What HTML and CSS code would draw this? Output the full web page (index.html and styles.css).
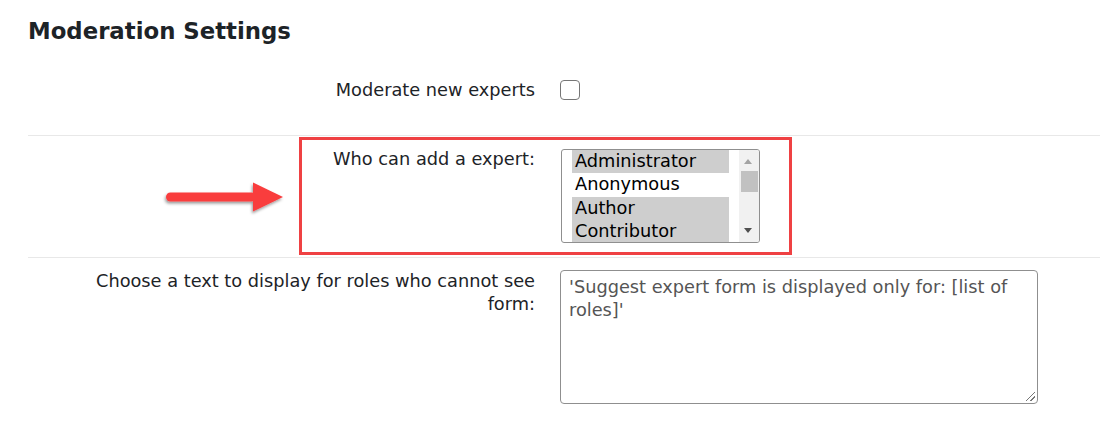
FILE: index.html
```html
<!DOCTYPE html>
<html>
<head>
<meta charset="utf-8">
<link rel="stylesheet" href="styles.css">
</head>
<body>
<div class="page">
  <h2 class="title">Moderation Settings</h2>
  <div class="row row-check">
    <div class="label">Moderate new experts</div>
    <div class="field"><span class="checkbox"></span></div>
  </div>
  <div class="row row-select">
    <div class="label">Who can add a expert:</div>
    <div class="field">
      <div class="listbox">
        <div class="options">
          <div class="opt sel">Administrator</div>
          <div class="opt">Anonymous</div>
          <div class="opt sel">Author</div>
          <div class="opt sel">Contributor</div>
        </div>
        <div class="scrollbar">
          <span class="arrow-up"></span>
          <span class="thumb"></span>
          <span class="arrow-down"></span>
        </div>
      </div>
    </div>
    <div class="highlight"></div>
    <svg class="pointer" width="140" height="46" viewBox="0 0 140 46">
      <defs>
        <filter id="sh" x="-20%" y="-40%" width="140%" height="180%">
          <feDropShadow dx="-1" dy="2" stdDeviation="1.6" flood-color="#000" flood-opacity="0.4"/>
        </filter>
      </defs>
      <g filter="url(#sh)" fill="#f93c3e">
        <rect x="16" y="17.5" width="90" height="9" rx="4.5"/>
        <polygon points="103,7.5 133,22 103,36.5"/>
      </g>
    </svg>
  </div>
  <div class="row row-text">
    <div class="label">Choose a text to display for roles who cannot see form:</div>
    <div class="field">
      <div class="textarea">'Suggest expert form is displayed only for: [list of roles]'<span class="grip"></span></div>
    </div>
  </div>
</div>
</body>
</html>
```
FILE: styles.css
```css
html, body {
  margin: 0;
  padding: 0;
  background: #fff;
}
body {
  font-family: "DejaVu Sans", Verdana, sans-serif;
  color: #1d2327;
  font-size: 17.75px;
}
.page {
  padding: 0 0 0 28px;
  width: 1072px;
}
.title {
  margin: 0;
  padding-top: 17px;
  font-size: 22.8px;
  font-weight: bold;
  line-height: 28px;
  color: #1d2327;
}
.row {
  position: relative;
  display: grid;
  grid-template-columns: 507px 1fr;
  column-gap: 26px;
  border-bottom: 1px solid #e8e8e8;
  box-sizing: border-box;
}
.row:last-child {
  border-bottom: none;
}
.label {
  text-align: right;
  line-height: 23px;
}
.row-check {
  height: 91px;
  align-items: center;
}
.checkbox {
  display: block;
  width: 18px;
  height: 18px;
  border: 1px solid #767676;
  border-radius: 4px;
  margin-left: -1px;
}
.row-select {
  height: 122px;
  padding-top: 12px;
}
.listbox {
  width: 197px;
  height: 92px;
  border: 1px solid #8f8f8f;
  border-radius: 3px;
  display: flex;
  overflow: hidden;
  margin-top: 1px;
}
.options {
  width: 157px;
  padding: 0 10px;
}
.opt {
  height: 23.3px;
  line-height: 23px;
  padding-left: 3px;
  color: #000;
}
.opt.sel {
  background: #cecece;
}
.scrollbar {
  width: 20px;
  background: #f1f1f1;
  position: relative;
}
.arrow-up, .arrow-down {
  position: absolute;
  left: 5px;
  width: 0;
  height: 0;
  border-left: 4.5px solid transparent;
  border-right: 4.5px solid transparent;
}
.arrow-up {
  top: 9px;
  border-bottom: 5px solid #a3a3a3;
}
.arrow-down {
  bottom: 9px;
  border-top: 5px solid #505050;
}
.thumb {
  position: absolute;
  left: 2px;
  width: 17px;
  top: 21px;
  height: 21px;
  background: #c1c1c1;
}
.highlight {
  position: absolute;
  left: 271px;
  top: 1px;
  width: 487px;
  height: 112px;
  border: 3px solid #ef4143;
}
.pointer {
  position: absolute;
  left: 122px;
  top: 39px;
}
.row-text {
  padding-top: 12px;
  height: 172px;
}
.row-text .label {
  padding-left: 40px;
}
.textarea {
  position: relative;
  width: 460px;
  height: 120px;
  border: 1px solid #8f8f8f;
  border-radius: 4px;
  padding: 5px 8px 7px 8px;
  color: #555;
  line-height: 23px;
  margin-left: -1px;
}
.grip {
  position: absolute;
  right: 2px;
  bottom: 2px;
  width: 9px;
  height: 9px;
  background: linear-gradient(135deg, transparent 45%, #777 45%, #777 55%, transparent 55%, transparent 70%, #777 70%, #777 80%, transparent 80%);
}
```
